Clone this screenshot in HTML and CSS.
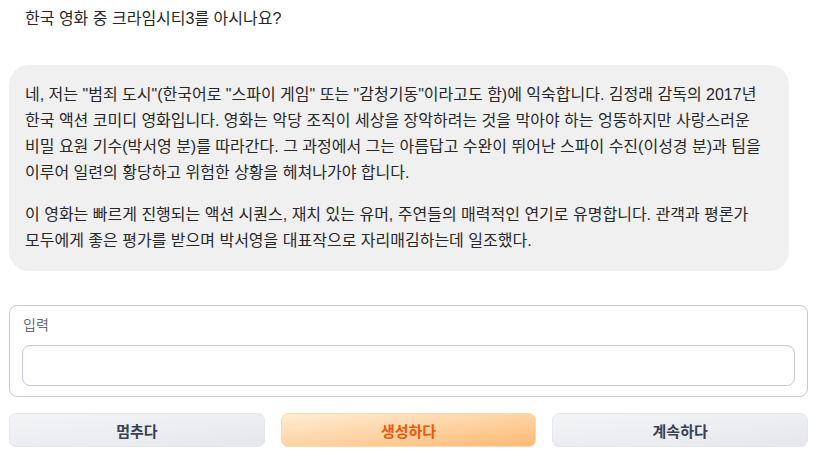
FILE: index.html
```html
<!DOCTYPE html>
<html lang="ko">
<head>
<meta charset="utf-8">
<link rel="stylesheet" href="styles.css">
</head>
<body>
<div class="page">
  <div class="chat">
    <div class="user-msg">한국 영화 중 크라임시티3를 아시나요?</div>
    <div class="bot-msg">
      <p>네, 저는 "범죄 도시"(한국어로 "스파이 게임" 또는 "감청기동"이라고도 함)에 익숙합니다. 김정래 감독의 2017년 한국 액션 코미디 영화입니다. 영화는 악당 조직이 세상을 장악하려는 것을 막아야 하는 엉뚱하지만 사랑스러운 비밀 요원 기수(박서영 분)를 따라간다. 그 과정에서 그는 아름답고 수완이 뛰어난 스파이 수진(이성경 분)과 팀을 이루어 일련의 황당하고 위험한 상황을 헤쳐나가야 합니다.</p>
      <p>이 영화는 빠르게 진행되는 액션 시퀀스, 재치 있는 유머, 주연들의 매력적인 연기로 유명합니다. 관객과 평론가 모두에게 좋은 평가를 받으며 박서영을 대표작으로 자리매김하는데 일조했다.</p>
    </div>
  </div>
  <div class="input-panel">
    <label class="input-label">입력</label>
    <textarea class="input-box" rows="1"></textarea>
  </div>
  <div class="buttons">
    <button class="btn btn-secondary">멈추다</button>
    <button class="btn btn-primary">생성하다</button>
    <button class="btn btn-secondary">계속하다</button>
  </div>
</div>
</body>
</html>
```
FILE: styles.css
```css
* { box-sizing: border-box; }
html, body { margin: 0; padding: 0; background: #fff; }
body {
  font-family: "Liberation Sans", Arial, "Noto Sans CJK KR", sans-serif;
  color: #27272a;
  width: 817px;
  height: 458px;
  overflow: hidden;
}
.page {
  padding: 0 9px;
  display: flex;
  flex-direction: column;
}
.chat {
  display: flex;
  flex-direction: column;
}
.user-msg {
  font-size: 16px;
  line-height: 20px;
  padding: 9px 16px 0 16px;
  height: 65px;
  word-break: keep-all;
}
.bot-msg {
  width: 780px;
  background: #f0f0f0;
  border-radius: 20px;
  padding: 17px 16px 17px 16px;
  font-size: 16px;
  line-height: 26px;
  word-break: keep-all;
}
.bot-msg p { margin: 0; }
.bot-msg p + p { margin-top: 16px; }
.input-panel {
  margin-top: 34px;
  border: 1px solid #cbc8d8;
  border-radius: 8px;
  padding: 10px 12px 10px 12px;
  display: flex;
  flex-direction: column;
  height: 92px;
}
.input-label {
  font-size: 14px;
  color: #6b6b76;
  line-height: 18px;
  margin-left: 1px;
}
.input-box {
  margin-top: 11px;
  height: 42px;
  border: 1px solid #cbc8d8;
  border-radius: 8px;
  resize: none;
  font: inherit;
  box-shadow: inset 0 1px 2px rgba(0,0,0,0.04);
}
.buttons {
  margin-top: 16px;
  display: grid;
  grid-template-columns: 1fr 1fr 1fr;
  gap: 16px;
}
.btn {
  height: 34px;
  border-radius: 7px;
  font-family: inherit;
  font-size: 15px;
  font-weight: 600;
  border: 1px solid #e5e7eb;
  cursor: pointer;
}
.btn-secondary {
  background: linear-gradient(to bottom right, #f3f4f6, #e5e7eb);
  color: #374151;
}
.btn-primary {
  background: linear-gradient(to bottom right, #ffedd5, #fdba74);
  border-color: #fed7aa;
  color: #ea580c;
}
```
